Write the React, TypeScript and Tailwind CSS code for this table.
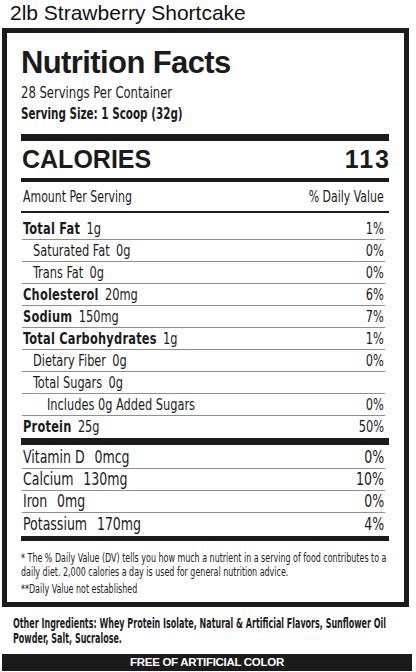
import React from "react";

const cond = "font-['Liberation_Sans_Narrow','DejaVu_Sans_Condensed','Liberation_Sans',sans-serif]";
const arial = "font-['Liberation_Sans','Arial',sans-serif]";

type Row = { label: string; amount?: string; dv?: string; bold?: boolean; indent?: number; last?: boolean };

const macros: Row[] = [
  { label: "Total Fat", amount: "1g", dv: "1%", bold: true },
  { label: "Saturated Fat", amount: "0g", dv: "0%", indent: 1 },
  { label: "Trans Fat", amount: "0g", dv: "0%", indent: 1 },
  { label: "Cholesterol", amount: "20mg", dv: "6%", bold: true },
  { label: "Sodium", amount: "150mg", dv: "7%", bold: true },
  { label: "Total Carbohydrates", amount: "1g", dv: "1%", bold: true },
  { label: "Dietary Fiber", amount: "0g", dv: "0%", indent: 1 },
  { label: "Total Sugars", amount: "0g", indent: 1 },
  { label: "Includes 0g Added Sugars", dv: "0%", indent: 2 },
  { label: "Protein", amount: "25g", dv: "50%", bold: true, last: true },
];

const minerals: Row[] = [
  { label: "Vitamin D", amount: "0mcg", dv: "0%" },
  { label: "Calcium", amount: "130mg", dv: "10%" },
  { label: "Iron", amount: "0mg", dv: "0%" },
  { label: "Potassium", amount: "170mg", dv: "4%", last: true },
];

function NutrientRow({ row, wide }: { row: Row; wide?: boolean }) {
  const pad = row.indent === 2 ? "pl-[25px]" : row.indent === 1 ? "pl-[11px]" : "pl-[1px]";
  const squeeze = wide ? "scale-x-[0.82]" : "scale-x-[0.79]";
  return (
    <div
      className={`flex items-center justify-between h-[22px] pr-[1px] ${pad} ${
        row.last ? "" : "border-b border-[#8f8f8f]"
      }`}
    >
      <div className={`leading-none whitespace-nowrap inline-block origin-left ${squeeze}`}>
        <span className={row.bold ? "font-bold tracking-[0.3px]" : ""}>{row.label}</span>
        {row.amount && <span className={wide ? "ml-[12px]" : "ml-[8px]"}>{row.amount}</span>}
      </div>
      <span className={`leading-none inline-block origin-right ${squeeze}`}>{row.dv}</span>
    </div>
  );
}

export default function App() {
  return (
    <div className="w-[416px] h-[672px] bg-white text-[#1b1b1b] overflow-hidden">
      <div className={`pl-[10px] pt-[1px] h-[28px] text-[21px] leading-[24px] ${arial} text-[#111]`}>
        2lb Strawberry Shortcake
      </div>

      <div className="ml-[2px] w-[407px] h-[579px] border-[5px] border-[#1b1b1b] pl-[14px] pr-[15px] overflow-hidden">
        <h1 className={`mt-[12px] text-[31px] leading-[36px] font-bold tracking-[-0.6px] ${arial}`}>
          Nutrition Facts
        </h1>
        <div className={`${cond} text-[15px] leading-[18px] mt-[3px] whitespace-nowrap origin-left scale-x-[0.86]`}>
          28 Servings Per Container
        </div>
        <div className={`${cond} text-[15px] leading-[18px] mt-[3px] font-bold whitespace-nowrap origin-left scale-x-[0.77]`}>
          Serving Size: 1 Scoop (32g)
        </div>

        <div className="mt-[11px] h-[7px] bg-[#1b1b1b]" />
        <div className={`flex justify-between items-center h-[37px] pl-[1px] ${arial} font-bold text-[25px] leading-none`}>
          <span>CALORIES</span>
          <span className="tracking-[2px] mr-[-2px]">113</span>
        </div>
        <div className="h-[4px] bg-[#1b1b1b]" />

        <div className={`${cond} text-[16px]`}>
          <div className="flex justify-between items-center h-[31px] pl-[2px] pr-[5px] border-b-2 border-[#1b1b1b]">
            <span className="inline-block origin-left scale-x-[0.76] whitespace-nowrap">Amount Per Serving</span>
            <span className="inline-block origin-right scale-x-[0.76] whitespace-nowrap">% Daily Value</span>
          </div>
          <div className="pt-[5px] ml-[1px] mr-[4px]">
            {macros.map((r) => (
              <NutrientRow key={r.label} row={r} />
            ))}
          </div>
          <div className="h-[7px] bg-[#1b1b1b]" />
          <div className="pt-[2px] ml-[1px] mr-[4px] text-[17px]">
            {minerals.map((r) => (
              <NutrientRow key={r.label} row={r} wide />
            ))}
          </div>
          <div className="mt-[1px] h-[5px] bg-[#1b1b1b]" />
        </div>

        <div className={`${cond} text-[11.5px] leading-[14px] mt-[10px] text-[#222] whitespace-nowrap`}>
          <p className="origin-left scale-x-[0.77]">
            * The % Daily Value (DV) tells you how much a nutrient in a serving of food contributes to a
            <br />
            daily diet. 2,000 calories a day is used for general nutrition advice.
          </p>
          <p className="mt-[3px] origin-left scale-x-[0.77]">**Daily Value not established</p>
        </div>
      </div>

      <p
        className={`${cond} ml-[13px] mt-[9px] text-[14px] leading-[15px] font-semibold text-[#1b1b1b] whitespace-nowrap origin-left scale-x-[0.635]`}
      >
        Other Ingredients: Whey Protein Isolate, Natural &amp; Artificial Flavors, Sunflower Oil
        <br />
        Powder, Salt, Sucralose.
      </p>

      <div className="mt-[8px] ml-[2px] w-[410px] h-[17px] bg-[#1b1b1b] flex items-center justify-center">
        <span className={`text-white font-bold text-[11.5px] leading-none tracking-[-0.3px] ${arial}`}>
          FREE OF ARTIFICIAL COLOR
        </span>
      </div>
    </div>
  );
}
